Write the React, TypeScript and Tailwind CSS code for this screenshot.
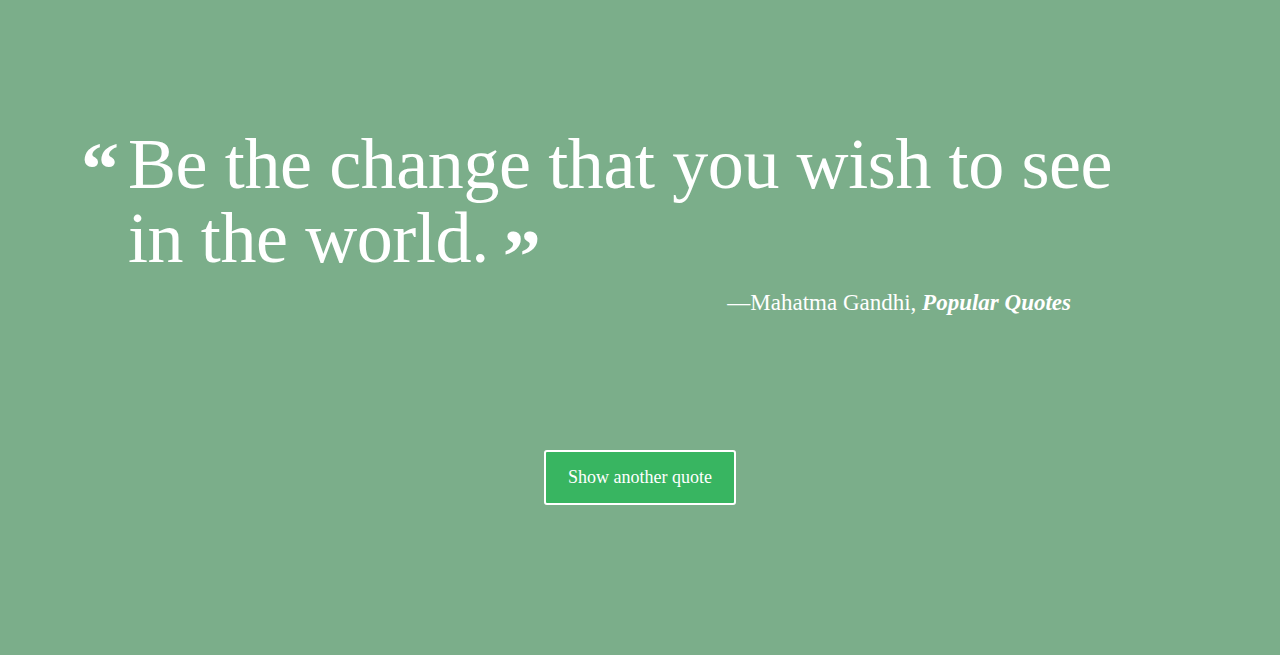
import React, { useState } from 'react';

const quotes = [
  { text: 'Be the change that you wish to see in the world.', author: 'Mahatma Gandhi', source: 'Popular Quotes' },
  { text: 'The only way to do great work is to love what you do.', author: 'Steve Jobs', source: 'Stanford Speech' },
];

const App = () => {
  const [index, setIndex] = useState(0);
  const quote = quotes[index];

  return (
    <div className="min-h-screen w-full bg-[#7bae8a] text-white font-['Liberation_Serif',serif]">
      <div className="pl-[84px] pt-[128px] w-[1130px]">
        <blockquote className="flex items-start">
          <span className="text-[76px] leading-none font-bold mt-[3px] ml-[-3px] w-[47px] shrink-0">&ldquo;</span>
          <p className="text-[72px] leading-[72px] tracking-[-0.4px]">
            {quote.text}
            <span className="relative top-[20px] text-[76px] leading-[72px] font-bold ml-[14px]">&rdquo;</span>
          </p>
        </blockquote>
        <div className="mt-[12px] pr-[59px] text-right text-[23px]">
          &mdash;{quote.author}, <cite className="italic font-bold">{quote.source}</cite>
        </div>
      </div>

      <div className="flex justify-center mt-[129px]">
        <button
          type="button"
          onClick={() => setIndex((index + 1) % quotes.length)}
          className="w-[192px] h-[55px] bg-[#38b561] border-2 border-white rounded-[3px] text-[18px] text-white"
        >
          Show another quote
        </button>
      </div>
    </div>
  );
};

export default App;
